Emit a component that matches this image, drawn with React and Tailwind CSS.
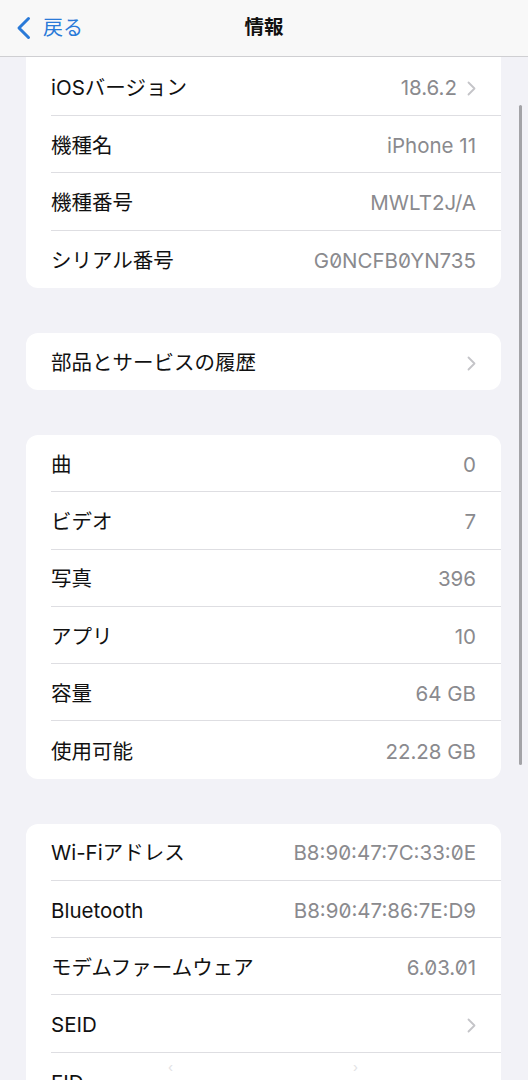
import React from 'react'

const font = { fontFamily: 'Inter, "Noto Sans CJK JP", sans-serif' }

function Chevron() {
    return (
        <svg width="9" height="15" viewBox="0 0 9 15" className="ml-[10px] shrink-0">
            <path d="M1.5 1.5 L7.5 7.5 L1.5 13.5" fill="none" stroke="#c4c4c8" strokeWidth="1.8" strokeLinecap="round" strokeLinejoin="round" />
        </svg>
    )
}

function Row({ label, value, chevron, last, tall, slashed }) {
    return (
        <div className={`flex items-stretch pl-[25px] ${tall ? 'h-[59px]' : 'h-[57.25px]'}`}>
            <div className={`flex-1 flex items-center pr-[25px] pt-[4px] ${last ? '' : 'border-b border-[#dedee2]'}`}>
                <span className="text-[20.5px] text-[#111] whitespace-nowrap">{label}</span>
                <span className="flex-1" />
                {value && (
                    <span className={`text-[20.5px] text-[#8a8a8e] whitespace-nowrap ${slashed ? "[font-feature-settings:'zero'_1]" : ''}`}>
                        {value}
                    </span>
                )}
                {chevron && <Chevron />}
            </div>
        </div>
    )
}

function Group({ rows, top }) {
    return (
        <div className={`bg-white overflow-hidden ${top ? 'rounded-b-[12px]' : 'rounded-[12px]'}`}>
            {rows.map((r, i) => (
                <Row key={r.label} {...r} tall={top && i === 0} last={i === rows.length - 1} />
            ))}
        </div>
    )
}

export default function App() {
    const device = [
        { label: 'iOSバージョン', value: '18.6.2', chevron: true },
        { label: '機種名', value: 'iPhone 11' },
        { label: '機種番号', value: 'MWLT2J/A' },
        { label: 'シリアル番号', value: 'G0NCFB0YN735', slashed: true },
    ]
    const media = [
        { label: '曲', value: '0' },
        { label: 'ビデオ', value: '7' },
        { label: '写真', value: '396' },
        { label: 'アプリ', value: '10' },
        { label: '容量', value: '64 GB' },
        { label: '使用可能', value: '22.28 GB' },
    ]
    const network = [
        { label: 'Wi-Fiアドレス', value: 'B8:90:47:7C:33:0E', slashed: true },
        { label: 'Bluetooth', value: 'B8:90:47:86:7E:D9', slashed: true },
        { label: 'モデムファームウェア', value: '6.03.01', slashed: true },
        { label: 'SEID', chevron: true },
        { label: 'EID', value: '' },
    ]

    return (
        <div className="relative w-[528px] h-[1080px] overflow-hidden bg-[#f2f2f7] flex flex-col" style={font}>
            {/* nav bar */}
            <div className="h-[57px] shrink-0 bg-[#f8f8f8] border-b border-[#cfcfd2] flex items-center relative">
                <div className="flex items-center pl-[16px] text-[#2a7ad8]">
                    <svg width="16" height="24" viewBox="0 0 16 24">
                        <path d="M12.5 2.5 L3 12 L12.5 21.5" fill="none" stroke="#2a7ad8" strokeWidth="3" strokeLinecap="round" strokeLinejoin="round" />
                    </svg>
                    <span className="ml-[11px] text-[20px]">戻る</span>
                </div>
                <div className="absolute inset-0 flex items-center justify-center pointer-events-none">
                    <span className="text-[19.5px] font-bold text-[#111]">情報</span>
                </div>
            </div>

            {/* content */}
            <div className="flex flex-col gap-[45px] pl-[26px] pr-[27px]">
                <Group rows={device} top />
                <Group rows={[{ label: '部品とサービスの履歴', chevron: true }]} />
                <Group rows={media} />
                <Group rows={network} />
            </div>

            {/* scroll indicator */}
            <div className="absolute left-[519px] top-[105px] w-[3px] h-[660px] rounded-full bg-[#a3a3a7]" />

            {/* faint bottom toolbar hint */}
            <div className="absolute left-[168px] top-[1058px] text-[13px] text-[#e2e2e4]">‹</div>
            <div className="absolute left-[353px] top-[1058px] text-[13px] text-[#e2e2e4]">›</div>
        </div>
    )
}
